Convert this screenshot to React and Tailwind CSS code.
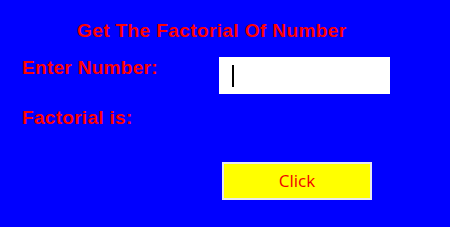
export default function App() {
  return (
    <div className="w-[450px] h-[227px] bg-[#0000ff] font-['Liberation_Sans',Arial,sans-serif] text-[#ff0000] overflow-hidden">
      <div className="pt-[21px] pl-[77px] text-[19px] leading-[19px] font-bold tracking-[0.4px] whitespace-nowrap">
        Get The Factorial Of Number
      </div>
      <div className="flex items-start mt-[17px] pl-[22px]">
        <div className="w-[197px] pt-[1px] text-[19px] leading-[19px] font-bold tracking-[0.3px] whitespace-nowrap">
          Enter Number:
        </div>
        <div className="w-[171px] h-[37px] bg-white flex items-center pl-[13px]">
          <span className="block w-[1.5px] h-[22px] bg-black" />
        </div>
      </div>
      <div className="mt-[14px] pl-[22px] text-[19px] leading-[19px] font-bold tracking-[0.3px] whitespace-nowrap">
        Factorial is:
      </div>
      <div className="mt-[35px] pl-[222px]">
        <button className="w-[150px] h-[38px] bg-[#ffff00] border-2 border-[#e8e8f0] text-[#f00000] font-['Open_Sans',sans-serif] text-[17px] flex items-center justify-center">
          Click
        </button>
      </div>
    </div>
  );
}
